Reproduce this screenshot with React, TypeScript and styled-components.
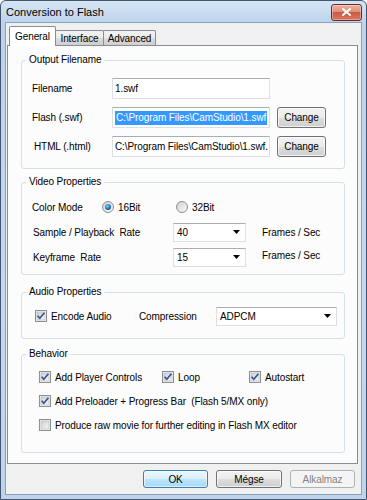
import React from "react";
import styled, { createGlobalStyle, css } from "styled-components";

const GlobalStyle = createGlobalStyle`
  html, body {
    margin: 0;
    padding: 0;
    background: #ffffff;
  }
  body {
    font-family: 'Liberation Sans', Arial, sans-serif;
    font-size: 10px;
    letter-spacing: -0.1px;
    color: #000000;
  }
`;

const Window = styled.div`
  width: 367px;
  height: 500px;
  box-sizing: border-box;
  display: flex;
  flex-direction: column;
  background: linear-gradient(180deg, #d6e5f4 0px, #bcd3eb 22px, #c4d9ee 60%, #bfd4ea 100%);
  border: 1px solid #42576f;
  border-radius: 6px 6px 0 0;
  padding: 0 4px 4px 4px;
`;

const TitleBar = styled.div`
  height: 21px;
  display: flex;
  flex-direction: row;
  align-items: center;
  justify-content: space-between;
  padding-left: 1px;
`;

const Title = styled.div`
  font-size: 11px;
  letter-spacing: 0;
  color: #000;
`;

const CloseButton = styled.div`
  width: 29px;
  height: 15px;
  margin-top: 1px;
  border: 1px solid #6d2a22;
  border-radius: 3px;
  background: linear-gradient(180deg, #eeb2a4 0%, #df8f7d 45%, #cc5a42 50%, #d9785f 100%);
  display: flex;
  align-items: center;
  justify-content: center;
  box-shadow: inset 0 0 0 1px rgba(255, 255, 255, 0.35);
`;

const Client = styled.div`
  flex: 1;
  display: flex;
  flex-direction: column;
  background: #f0f0f0;
  border: 1px solid #8aa1bb;
  padding: 3px 3px 0 1px;
`;

const TabStrip = styled.div`
  display: flex;
  flex-direction: row;
  align-items: flex-end;
  padding-left: 2px;
  height: 19px;
  position: relative;
  z-index: 1;
`;

const Tab = styled.div<{ active?: boolean; $w: number }>`
  width: ${p => p.$w}px;
  box-sizing: border-box;
  height: 15px;
  border: 1px solid #898c95;
  border-bottom: none;
  margin-right: -1px;
  border-radius: 2px 2px 0 0;
  background: linear-gradient(180deg, #f2f2f2 0%, #ebebeb 50%, #dddddd 51%, #cfcfcf 100%);
  display: flex;
  align-items: center;
  justify-content: center;
  padding-top: 1px;

  ${p => p.active && css`
    height: 20px;
    margin-bottom: -1px;
    background: #ffffff;
    padding-bottom: 2px;
  `}
`;

const Panel = styled.div`
  height: 419px;
  box-sizing: border-box;
  background: #fcfcfc;
  border: 1px solid #898c95;
  padding: 8px 12px 0 13px;
  display: flex;
  flex-direction: column;
`;

const Group = styled.fieldset<{ $gap?: number }>`
  margin: ${p => p.$gap ?? 0}px 0 0 0;
  padding: 0;
  border: 1px solid #d5dfe5;
  border-radius: 3px;
  min-width: 0;
`;

const Legend = styled.legend`
  margin-left: 4px;
  padding: 0 3px;
  line-height: 12px;
`;

const GroupBody = styled.div<{ $pt: number; $pb: number; $gap: number; $pl?: number }>`
  display: flex;
  flex-direction: column;
  gap: ${p => p.$gap}px;
  padding: ${p => p.$pt}px 0 ${p => p.$pb}px ${p => p.$pl ?? 10}px;
`;

const Row = styled.div<{ $h: number }>`
  display: flex;
  flex-direction: row;
  align-items: center;
  height: ${p => p.$h}px;
`;

const Label = styled.div<{ $w: number; $dx?: number; $dy?: number }>`
  width: ${p => p.$w}px;
  flex-shrink: 0;
  padding-left: ${p => p.$dx ?? 0}px;
  margin-top: ${p => p.$dy ?? 0}px;
  box-sizing: border-box;
  white-space: nowrap;
`;

const TextBox = styled.div<{ $w: number }>`
  width: ${p => p.$w}px;
  height: 21px;
  box-sizing: border-box;
  background: #ffffff;
  border: 1px solid #dbdfe6;
  border-top-color: #abadb3;
  display: flex;
  align-items: center;
  padding-left: 2px;
  white-space: nowrap;
  overflow: hidden;
  flex-shrink: 0;
`;

const Selected = styled.span`
  background: #3399ff;
  color: #ffffff;
  line-height: 14px;
  padding: 0 1px;
`;

const PushButton = styled.div<{ $w: number; $h?: number; $ml?: number; $default?: boolean; $disabled?: boolean }>`
  width: ${p => p.$w}px;
  height: ${p => p.$h ?? 21}px;
  margin-left: ${p => p.$ml ?? 0}px;
  box-sizing: border-box;
  border: 1px solid #707070;
  border-radius: 3px;
  background: linear-gradient(180deg, #f2f2f2 0%, #ebebeb 50%, #dddddd 51%, #cfcfcf 100%);
  box-shadow: inset 0 0 0 1px rgba(255, 255, 255, 0.7);
  display: flex;
  align-items: center;
  justify-content: center;
  flex-shrink: 0;

  ${p => p.$default && css`
    border-color: #3c7fb1;
    background: linear-gradient(180deg, #eaf6fd 0%, #d9f0fc 50%, #bee6fd 51%, #a7d9f5 100%);
    box-shadow: inset 0 0 0 1px rgba(255, 255, 255, 0.6);
  `}

  ${p => p.$disabled && css`
    border-color: #adb2b5;
    background: #f4f4f4;
    color: #838383;
    box-shadow: none;
  `}
`;

const Combo = styled.div<{ $w: number }>`
  width: ${p => p.$w}px;
  height: 19px;
  box-sizing: border-box;
  background: #ffffff;
  border: 1px solid #dbdfe6;
  border-top-color: #abadb3;
  display: flex;
  align-items: center;
  justify-content: space-between;
  padding: 0 5px 0 3px;
  flex-shrink: 0;
`;

const Option = styled.label<{ $w?: number }>`
  display: flex;
  align-items: center;
  gap: 4px;
  width: ${p => (p.$w ? `${p.$w}px` : "auto")};
  flex-shrink: 0;
  white-space: nowrap;
`;

const ButtonBar = styled.div`
  flex: 1;
  display: flex;
  flex-direction: row;
  align-items: center;
  justify-content: flex-end;
  gap: 8px;
  padding-right: 3px;
`;

const Arrow = () => (
  <svg width="7" height="4" viewBox="0 0 7 4">
    <path d="M0 0 H7 L3.5 4 Z" fill="#000" />
  </svg>
);

const CheckBox: React.FC<{ checked?: boolean }> = ({ checked }) => (
  <svg width="12" height="12" viewBox="0 0 12 12">
    <defs>
      <linearGradient id="cbg" x1="0" y1="0" x2="1" y2="1">
        <stop offset="0" stopColor="#cdd0d6" />
        <stop offset="1" stopColor="#f6f6f6" />
      </linearGradient>
    </defs>
    <rect x="0.5" y="0.5" width="11" height="11" fill="#f4f4f4" stroke="#8e8f8f" />
    <rect x="2" y="2" width="8" height="8" fill="url(#cbg)" stroke="#b0b4bb" strokeWidth="0.6" />
    {checked && (
      <path d="M2.6 5.8 L4.8 8.2 L9.4 2.8" fill="none" stroke="#3a5590" strokeWidth="1.7" />
    )}
  </svg>
);

const Radio: React.FC<{ checked?: boolean }> = ({ checked }) => (
  <svg width="12" height="12" viewBox="0 0 12 12">
    <defs>
      <radialGradient id="rdot" cx="0.4" cy="0.35" r="0.7">
        <stop offset="0" stopColor="#7fd3fb" />
        <stop offset="0.6" stopColor="#1e82c8" />
        <stop offset="1" stopColor="#0d4a80" />
      </radialGradient>
      <linearGradient id="rbg" x1="0" y1="0" x2="1" y2="1">
        <stop offset="0" stopColor="#cfd2d8" />
        <stop offset="1" stopColor="#fafafa" />
      </linearGradient>
    </defs>
    <circle cx="6" cy="6" r="5.5" fill="url(#rbg)" stroke="#8e8f8f" />
    {checked && <circle cx="6" cy="6" r="3" fill="url(#rdot)" />}
  </svg>
);

const CloseX = () => (
  <svg width="9" height="8" viewBox="0 0 9 8">
    <path d="M1 1 L8 7 M8 1 L1 7" stroke="#ffffff" strokeWidth="2" strokeLinecap="square" />
  </svg>
);

export default function App() {
  return (
    <>
      <GlobalStyle />
      <Window>
        <TitleBar>
          <Title>Conversion to Flash</Title>
          <CloseButton>
            <CloseX />
          </CloseButton>
        </TitleBar>
        <Client>
          <TabStrip>
            <Tab active $w={47}>General</Tab>
            <Tab $w={49}>Interface</Tab>
            <Tab $w={53}>Advanced</Tab>
          </TabStrip>
          <Panel>
            <Group>
              <Legend>Output Filename</Legend>
              <GroupBody $pt={12} $pb={11} $gap={8}>
                <Row $h={21}>
                  <Label $w={80}>Filename</Label>
                  <TextBox $w={158}>1.swf</TextBox>
                </Row>
                <Row $h={21}>
                  <Label $w={80}>Flash (.swf)</Label>
                  <TextBox $w={158}>
                    <Selected>C:\Program Files\CamStudio\1.swf</Selected>
                  </TextBox>
                  <PushButton $w={49} $ml={7}>Change</PushButton>
                </Row>
                <Row $h={21}>
                  <Label $w={80} $dx={2}>HTML (.html)</Label>
                  <TextBox $w={158}>C:\Program Files\CamStudio\1.swf.</TextBox>
                  <PushButton $w={49} $ml={7}>Change</PushButton>
                </Row>
              </GroupBody>
            </Group>

            <Group $gap={7}>
              <Legend>Video Properties</Legend>
              <GroupBody $pt={9} $pb={7} $gap={5}>
                <Row $h={20}>
                  <Label $w={70}>Color Mode</Label>
                  <Option $w={74}>
                    <Radio checked />
                    16Bit
                  </Option>
                  <Option>
                    <Radio />
                    32Bit
                  </Option>
                </Row>
                <Row $h={20}>
                  <Label $w={141} $dx={1}>Sample / Playback&nbsp; Rate</Label>
                  <Combo $w={73}>
                    40
                    <Arrow />
                  </Combo>
                  <Label $w={90} $dx={16}>Frames / Sec</Label>
                </Row>
                <Row $h={20}>
                  <Label $w={141} $dx={1}>Keyframe&nbsp; Rate</Label>
                  <Combo $w={73}>
                    15
                    <Arrow />
                  </Combo>
                  <Label $w={90} $dx={16} $dy={-4}>Frames / Sec</Label>
                </Row>
              </GroupBody>
            </Group>

            <Group $gap={11}>
              <Legend>Audio Properties</Legend>
              <GroupBody $pt={8} $pb={12} $gap={0} $pl={13}>
                <Row $h={20}>
                  <Option $w={104}>
                    <CheckBox checked />
                    Encode Audio
                  </Option>
                  <Label $w={77}>Compression</Label>
                  <Combo $w={121}>
                    ADPCM
                    <Arrow />
                  </Combo>
                </Row>
              </GroupBody>
            </Group>

            <Group $gap={9}>
              <Legend>Behavior</Legend>
              <GroupBody $pt={9} $pb={19} $gap={8} $pl={17}>
                <Row $h={16}>
                  <Option $w={123}>
                    <CheckBox checked />
                    Add Player Controls
                  </Option>
                  <Option $w={87}>
                    <CheckBox checked />
                    Loop
                  </Option>
                  <Option>
                    <CheckBox checked />
                    Autostart
                  </Option>
                </Row>
                <Row $h={16}>
                  <Option>
                    <CheckBox checked />
                    Add Preloader + Progress Bar&nbsp; (Flash 5/MX only)
                  </Option>
                </Row>
                <Row $h={16}>
                  <Option>
                    <CheckBox />
                    Produce raw movie for further editing in Flash MX editor
                  </Option>
                </Row>
              </GroupBody>
            </Group>
          </Panel>
          <ButtonBar>
            <PushButton $w={65} $h={18} $default>OK</PushButton>
            <PushButton $w={66} $h={18}>Mégse</PushButton>
            <PushButton $w={65} $h={18} $disabled>Alkalmaz</PushButton>
          </ButtonBar>
        </Client>
      </Window>
    </>
  );
}
